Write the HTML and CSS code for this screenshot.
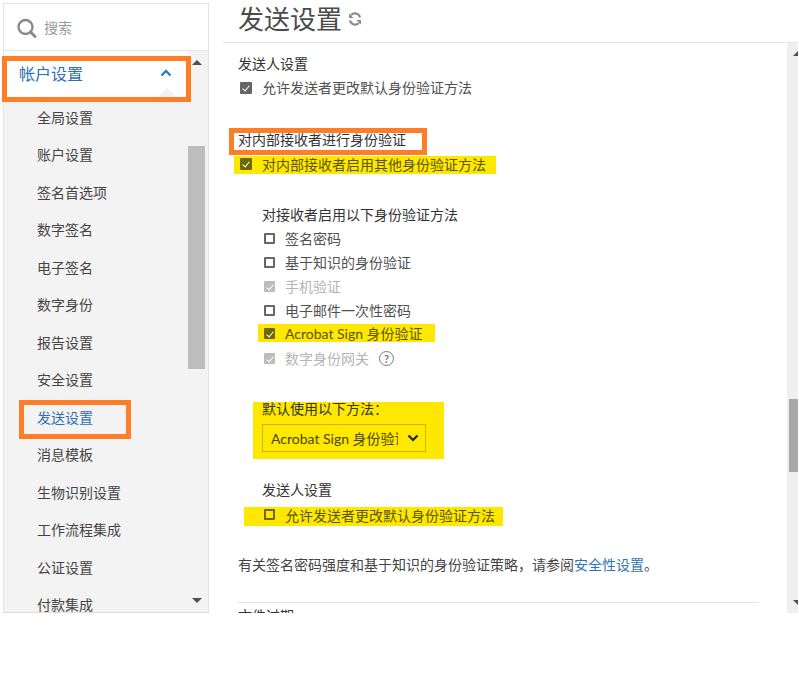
FILE: index.html
```html
<!DOCTYPE html>
<html lang="zh-CN">
<head>
  <meta charset="UTF-8" />
  <title>发送设置</title>
  <link rel="stylesheet" href="styles.css">
</head>
<body>
  <div class="app">
    <aside class="sidebar">
      <div class="search">
        <svg class="search-icon" width="22" height="22" viewBox="0 0 22 22">
          <circle cx="8.500" cy="9" r="7" fill="none" stroke="#8a8a8a" stroke-width="2.400" />
          <path d="M13.500 14l4.500 4.500" stroke="#8a8a8a" stroke-width="3" stroke-linecap="round" />
        </svg>
        <span>搜索</span>
      </div>
      <div class="nav-wrap">
        <nav class="nav">
          <div class="nav-head">
            <span>帐户设置</span>
            <svg width="12" height="8" viewBox="0 0 12 8"><path d="M1.500 6.500L6 2l4.500 4.500" fill="none" stroke="#2f7bbf" stroke-width="2.400" /></svg>
          </div>
          <a>全局设置</a>
          <a>账户设置</a>
          <a>签名首选项</a>
          <a>数字签名</a>
          <a>电子签名</a>
          <a>数字身份</a>
          <a>报告设置</a>
          <a>安全设置</a>
          <a class="active">发送设置</a>
          <a>消息模板</a>
          <a>生物识别设置</a>
          <a>工作流程集成</a>
          <a>公证设置</a>
          <a>付款集成</a>
        </nav>
        <div class="scrollbar nav-scroll">
          <i class="arrow-up"></i>
          <div class="thumb"></div>
          <i class="arrow-down"></i>
        </div>
      </div>
      <div class="mark mark-head"></div>
      <div class="mark mark-item"></div>
    </aside>

    <main class="main">
      <header class="title">
        <h1>发送设置</h1>
        <svg width="14" height="14" viewBox="0 0 14 14">
          <path d="M12 5.500A5.200 5.200 0 0 0 3 3.200M2 8.500A5.200 5.200 0 0 0 11 10.800" fill="none" stroke="#8a8a8a" stroke-width="2" />
          <path d="M1 1.500V6h4.500zM13 12.500V8H8.500z" fill="#8a8a8a" />
        </svg>
      </header>
      <div class="content-wrap">
        <div class="content">
          <section class="sender">
            <h2>发送人设置</h2>
            <label class="check"><i class="box on"></i>允许发送者更改默认身份验证方法</label>
          </section>

          <section class="internal">
            <h2 class="internal-title">对内部接收者进行身份验证</h2>
            <label class="check hl hl-enable"><i class="box on"></i>对内部接收者启用其他身份验证方法</label>

            <div class="sub">
              <h3>对接收者启用以下身份验证方法</h3>
              <ul class="methods">
                <li class="check"><i class="box"></i>签名密码</li>
                <li class="check"><i class="box"></i>基于知识的身份验证</li>
                <li class="check off"><i class="box on"></i>手机验证</li>
                <li class="check"><i class="box"></i>电子邮件一次性密码</li>
                <li class="check hl hl-acrobat"><i class="box on"></i>Acrobat Sign 身份验证</li>
                <li class="check off"><i class="box on"></i>数字身份网关<span class="help">?</span></li>
              </ul>

              <div class="hl default-box">
                <div class="default-label">默认使用以下方法：</div>
                <div class="select">
                  <span>Acrobat Sign 身份验证</span>
                  <svg width="12" height="8" viewBox="0 0 12 8"><path d="M1.500 1.500L6 6l4.500-4.500" fill="none" stroke="#222" stroke-width="2.200" /></svg>
                </div>
              </div>

              <h3 class="sub-sender">发送人设置</h3>
              <label class="check hl hl-allow"><i class="box"></i>允许发送者更改默认身份验证方法</label>
            </div>
          </section>

          <p class="note">有关签名密码强度和基于知识的身份验证策略，请参阅<a>安全性设置</a>。</p>
          <h2 class="next">文件过期</h2>
        </div>
        <div class="scrollbar page-scroll">
          <i class="arrow-up"></i>
          <div class="thumb"></div>
          <i class="arrow-down"></i>
        </div>
      </div>
    </main>
  </div>
</body>
</html>
```

FILE: styles.css
```css
* {
  box-sizing: border-box;
}
html, body {
  margin: 0;
  background: #fff;
}
body {
  font-family: Lato, "Noto Sans CJK SC", sans-serif;
  color: #444;
  font-size: 14px;
  height: 682px;
  overflow: hidden;
}
.app {
  display: flex;
  height: 613px;
  padding: 0 1px 0 3px;
}

/* left column */
.sidebar {
  position: relative;
  width: 206px;
  flex: none;
  border: 1px solid #e4e4e4;
  border-bottom-color: #dcdcdc;
  margin-top: 3px;
  display: flex;
  flex-direction: column;
}
.search {
  height: 47px;
  flex: none;
  display: flex;
  align-items: center;
  gap: 5px;
  padding-left: 13px;
  color: #9a9a9a;
  border-bottom: 1px solid #e4e4e4;
}
.search-icon {
  margin-top: 4px;
}
.nav-wrap {
  flex: 1;
  display: flex;
  min-height: 0;
  background: #f3f3f3;
}
.nav {
  flex: 1;
  overflow: hidden;
}
.nav-head {
  position: relative;
  height: 46px;
  background: #fff;
  display: flex;
  align-items: center;
  justify-content: space-between;
  padding: 0 16px 2px 15px;
  color: #2f6fb5;
  font-size: 16px;
}
.nav-head::after {
  content: "";
  position: absolute;
  right: 12px;
  bottom: 0;
  border-left: 9px solid transparent;
  border-right: 9px solid transparent;
  border-bottom: 9px solid #f1f1f1;
}
.nav a {
  display: flex;
  align-items: center;
  height: 37.500px;
  padding-left: 33px;
  color: #444;
}
.nav a:first-of-type {
  margin-top: 1px;
}
.nav a.active {
  color: #2f6fb5;
}
.scrollbar {
  position: relative;
  flex: none;
  overflow: hidden;
}
.nav-scroll {
  width: 20px;
  background: #f3f3f3;
}
.nav-scroll .thumb {
  position: absolute;
  top: 95px;
  left: 0;
  width: 17px;
  height: 223px;
  background: #bdbdbd;
}
.arrow-up, .arrow-down {
  position: absolute;
  left: 4px;
  width: 0;
  height: 0;
  border-left: 5px solid transparent;
  border-right: 5px solid transparent;
}
.arrow-up {
  top: 9px;
  border-bottom: 5px solid #505050;
}
.arrow-down {
  bottom: 9px;
  border-top: 5px solid #505050;
}

/* orange notes drawn over the page */
.mark {
  position: absolute;
  border: 5px solid #fd7e27;
  pointer-events: none;
}
.mark-head {
  top: 52px;
  left: -2px;
  width: 189px;
  height: 46px;
}
.mark-item {
  top: 396px;
  left: 15px;
  width: 112px;
  height: 39px;
}

/* right column */
.main {
  flex: 1;
  min-width: 0;
  padding-left: 14px;
  display: flex;
  flex-direction: column;
}
.title {
  height: 43px;
  flex: none;
  border-bottom: 1px solid #e4e4e4;
  display: flex;
  align-items: center;
  gap: 6px;
  padding: 0 0 5px 15px;
}
.title h1 {
  margin: 0;
  font-size: 26px;
  font-weight: 400;
  color: #4b4b4b;
  line-height: 36px;
}
.content-wrap {
  flex: 1;
  display: flex;
  min-height: 0;
}
.content {
  flex: 1;
  min-width: 0;
  overflow: hidden;
  padding: 11px 0 0 15px;
  margin-right: 28px;
}
h2, h3 {
  margin: 0;
  font-size: 14px;
  font-weight: 400;
  color: #333;
  line-height: 20px;
}
.check {
  display: flex;
  align-items: center;
  height: 24px;
  padding-bottom: 2px;
  color: #505050;
}
.box {
  width: 12px;
  height: 12px;
  flex: none;
  margin: 0 10px 0 2px;
  border: 2px solid #666;
  border-radius: 1px;
  position: relative;
}
.sender .box {
  margin-top: 1px;
}
.sub .box {
  width: 11px;
  height: 11px;
}
.box.on {
  background: #666;
}
.box.on::after {
  content: "";
  position: absolute;
  left: 2px;
  top: 0;
  width: 3px;
  height: 6px;
  border: solid #fff;
  border-width: 0 1.500px 1.500px 0;
  transform: rotate(40deg);
}
.off {
  color: #b4b4b4;
}
.off .box {
  border-color: #bdbdbd;
  background: #bdbdbd;
}
.sender .check {
  margin-top: 2px;
}
.internal {
  margin-top: 28px;
}
.internal-title {
  height: 27px;
  margin-left: -9px;
  width: 198px;
  border: 5px solid #fd7e27;
  display: flex;
  align-items: center;
  padding: 0 0 3px 4px;
  white-space: nowrap;
}
.hl {
  background: #ffe800;
  color: #5c5500;
}
.hl .box {
  border-color: #6e6800;
}
.hl .box.on {
  background: #6e6800;
}
.hl-enable {
  width: 262px;
  margin-left: -4px;
  padding-left: 4px;
  padding-bottom: 3px;
  height: 18px;
  margin-top: 1px;
}
.sub {
  padding-left: 24px;
  margin-top: 31px;
}
.methods {
  list-style: none;
  margin: 2px 0 0;
  padding: 0;
}
.hl-acrobat {
  width: 177px;
  height: 18px;
  margin: 1px 0 5px -4px;
  padding-left: 4px;
  padding-bottom: 0;
}
.help {
  width: 15px;
  height: 15px;
  margin-left: 10px;
  border: 1.500px solid #777;
  border-radius: 50%;
  color: #777;
  font-size: 11px;
  font-weight: 700;
  display: flex;
  align-items: center;
  justify-content: center;
}
.default-box {
  width: 191px;
  height: 57px;
  margin: 31px 0 0 -9px;
  padding: 0 9px;
}
.default-label {
  color: #333;
  line-height: 14px;
}
.select {
  width: 164px;
  height: 28px;
  margin-top: 8px;
  border: 1px solid #c8b800;
  display: flex;
  align-items: center;
  justify-content: space-between;
  padding: 0 6px 0 8px;
  color: #4a4500;
}
.select span {
  width: 127px;
  overflow: hidden;
  white-space: nowrap;
}
.sub-sender {
  margin-top: 21px;
}
.hl-allow {
  width: 259px;
  height: 19px;
  margin: 7px 0 0 -18px;
  padding-left: 18px;
  padding-bottom: 4px;
}
.note {
  margin: 29px 0 0;
  line-height: 20px;
  white-space: nowrap;
}
.note a {
  color: #2f74b5;
}
.next {
  margin-top: 27px;
  padding-top: 3px;
  border-top: 1px solid #e4e4e4;
}
.page-scroll {
  width: 11px;
  background: #efefef;
}
.page-scroll .thumb {
  position: absolute;
  top: 356px;
  left: 2px;
  width: 9px;
  height: 73px;
  background: #a8a8a8;
}
.page-scroll .arrow-up, .page-scroll .arrow-down {
  left: 6px;
}
.page-scroll .arrow-up {
  top: 8px;
}
.page-scroll .arrow-down {
  bottom: 8px;
}
```
